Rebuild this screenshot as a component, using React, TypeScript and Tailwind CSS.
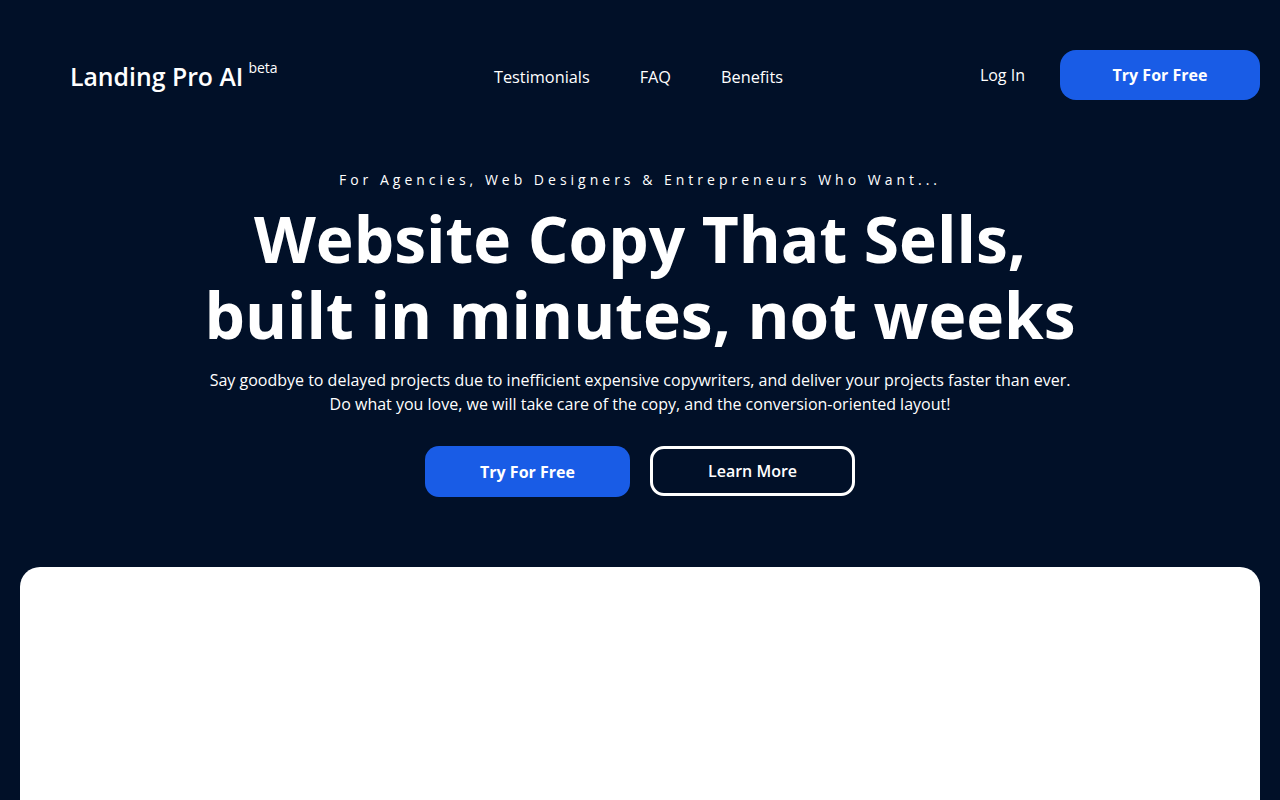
import React from "react";

export default function App() {
  return (
    <div
      className="min-h-screen bg-[#011028] text-white overflow-hidden"
      style={{ fontFamily: '"Open Sans", "Noto Sans", sans-serif' }}
    >
      <header className="flex items-center h-[150px] pl-[70px] pr-[20px]">
        <div className="flex items-start w-[340px] mt-[2px]">
          <span className="text-[24.8px] font-semibold leading-none">Landing Pro AI</span>
          <span className="text-[14px] leading-none ml-[5px] -mt-[3px]">beta</span>
        </div>
        <nav className="flex items-center gap-[50px] ml-[84px] text-[16.3px] mt-[4px]">
          <a>Testimonials</a>
          <a>FAQ</a>
          <a>Benefits</a>
        </nav>
        <div className="flex items-center ml-auto">
          <a className="text-[16px] mr-[35px]">Log In</a>
          <button className="w-[200px] h-[50px] rounded-[16px] bg-[#195ce6] text-[16px] font-bold">
            Try For Free
          </button>
        </div>
      </header>

      <section className="flex flex-col items-center text-center mt-[18px]">
        <p className="text-[14px] tracking-[4px] leading-[24px]">
          For Agencies, Web Designers &amp; Entrepreneurs Who Want...
        </p>
        <h1 className="text-[64px] font-bold leading-[76px] mt-[9px]">
          Website Copy That Sells,
          <br />
          built in minutes, not weeks
        </h1>
        <p className="text-[16px] leading-[24px] mt-[15px]">
          Say goodbye to delayed projects due to inefficient expensive copywriters, and deliver your projects faster than ever.
          <br />
          Do what you love, we will take care of the copy, and the conversion-oriented layout!
        </p>
        <div className="flex gap-[20px] mt-[30px]">
          <button className="w-[205px] h-[51px] rounded-[14px] bg-[#195ce6] text-[16px] font-bold">
            Try For Free
          </button>
          <button className="w-[205px] h-[50px] rounded-[14px] border-[3px] border-white text-[16px] font-semibold">
            Learn More
          </button>
        </div>
      </section>

      <div className="mx-[20px] mt-[70px] h-[400px] bg-white rounded-[20px]" />
    </div>
  );
}
